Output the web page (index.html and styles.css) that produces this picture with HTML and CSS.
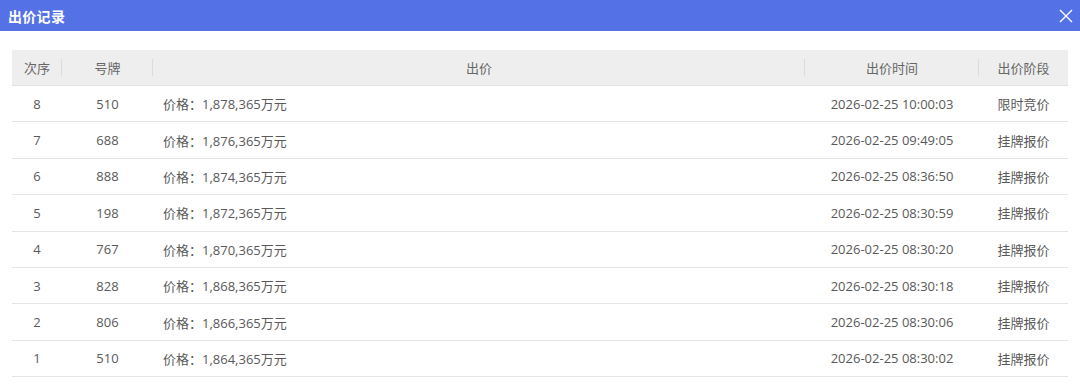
FILE: index.html
```html
<!DOCTYPE html>
<html lang="zh">
<head>
<meta charset="utf-8">
<link rel="stylesheet" href="styles.css">
</head>
<body>
<div class="dialog">
  <div class="titlebar">
    <span class="title">出价记录</span>
    <svg class="close" width="14" height="14" viewBox="0 0 14 14"><path d="M1 1L13 13M13 1L1 13" stroke="#fff" stroke-width="1.4" fill="none"/></svg>
  </div>
  <div class="body">
    <table class="grid">
      <colgroup>
        <col style="width:50px"><col style="width:91px"><col><col style="width:174px"><col style="width:89px">
      </colgroup>
      <thead>
        <tr>
          <th><span class="sep">次序</span></th>
          <th><span class="sep">号牌</span></th>
          <th><span class="sep">出价</span></th>
          <th><span class="sep">出价时间</span></th>
          <th><span>出价阶段</span></th>
        </tr>
      </thead>
      <tbody>
        <tr><td>8</td><td>510</td><td class="price">价格：1,878,365万元</td><td>2026-02-25 10:00:03</td><td>限时竞价</td></tr>
        <tr><td>7</td><td>688</td><td class="price">价格：1,876,365万元</td><td>2026-02-25 09:49:05</td><td>挂牌报价</td></tr>
        <tr><td>6</td><td>888</td><td class="price">价格：1,874,365万元</td><td>2026-02-25 08:36:50</td><td>挂牌报价</td></tr>
        <tr><td>5</td><td>198</td><td class="price">价格：1,872,365万元</td><td>2026-02-25 08:30:59</td><td>挂牌报价</td></tr>
        <tr><td>4</td><td>767</td><td class="price">价格：1,870,365万元</td><td>2026-02-25 08:30:20</td><td>挂牌报价</td></tr>
        <tr><td>3</td><td>828</td><td class="price">价格：1,868,365万元</td><td>2026-02-25 08:30:18</td><td>挂牌报价</td></tr>
        <tr><td>2</td><td>806</td><td class="price">价格：1,866,365万元</td><td>2026-02-25 08:30:06</td><td>挂牌报价</td></tr>
        <tr><td>1</td><td>510</td><td class="price">价格：1,864,365万元</td><td>2026-02-25 08:30:02</td><td>挂牌报价</td></tr>
      </tbody>
    </table>
  </div>
</div>
</body>
</html>
```

FILE: styles.css
```css
html, body {
  margin: 0;
  padding: 0;
  background: #fff;
}
body {
  font-family: "Open Sans", "Noto Sans CJK SC", sans-serif;
  color: #595959;
}
.dialog {
  width: 1080px;
  height: 388px;
  overflow: hidden;
}
.titlebar {
  height: 31px;
  background: #5471e6;
  display: flex;
  align-items: center;
  justify-content: space-between;
  padding: 0 7px 0 8px;
}
.title {
  color: #fff;
  font-family: "Noto Sans CJK SC", sans-serif;
  font-weight: 700;
  font-size: 14px;
  letter-spacing: 0.3px;
}
.close {
  display: block;
}
.body {
  padding: 19px 12px 0 12px;
}
.grid {
  width: 1056px;
  border-collapse: collapse;
  table-layout: fixed;
  font-size: 13px;
}
.grid th {
  height: 35px;
  background: #eeeeee;
  color: #666;
  font-weight: 400;
  font-family: "Noto Sans CJK SC", sans-serif;
  padding: 0;
  text-align: center;
  border-bottom: 1px solid #e2e2e2;
  position: relative;
}
.grid th .sep::after {
  content: "";
  position: absolute;
  right: 0;
  top: 9px;
  bottom: 9px;
  width: 1px;
  background: #dcdcdc;
}
.grid td {
  height: 35.4px;
  padding: 0;
  text-align: center;
  border-bottom: 1px solid #e4e4e4;
  white-space: nowrap;
}
.grid td.price {
  text-align: left;
  padding-left: 10px;
}
```
